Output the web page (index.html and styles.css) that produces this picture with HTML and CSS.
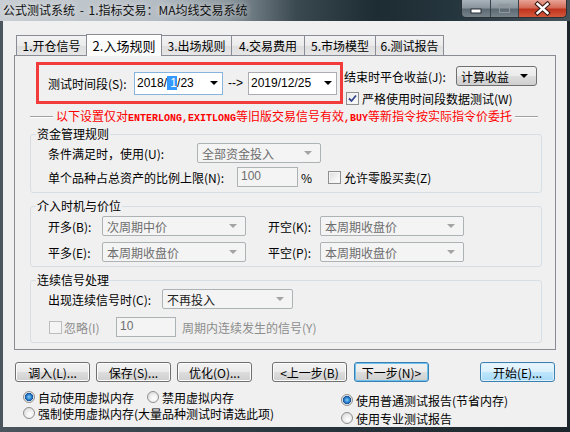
FILE: index.html
```html
<!DOCTYPE html>
<html lang="zh-CN">
<head>
    <meta charset="UTF-8">
    <title>公式测试系统</title>
    <link rel="stylesheet" href="styles.css">
</head>
<body>
<div class="window">

    <!-- Title bar -->
    <div class="titlebar">
        <span class="title">公式测试系统 - 1.指标交易：MA均线交易系统</span>
        <div class="caption-btns">
            <span class="cbtn cbtn-min">
                <svg width="28" height="17" viewBox="0 0 28 17"><rect x="9" y="9" width="10" height="4" fill="#fff" stroke="#2a2f34" stroke-width="1"/></svg>
            </span>
            <span class="cbtn cbtn-max">
                <svg width="27" height="17" viewBox="0 0 27 17"><rect x="8.5" y="4.5" width="10" height="8" fill="none" stroke="#8f979d" stroke-width="1"/><rect x="9.5" y="5.5" width="8" height="2" fill="#8f979d"/></svg>
            </span>
            <span class="cbtn cbtn-close">
                <svg width="47" height="17" viewBox="0 0 47 17">
                    <path d="M18.5 4 L28.5 13 M28.5 4 L18.5 13" stroke="#3a1a14" stroke-width="4.5" stroke-linecap="square"/>
                    <path d="M18.5 4 L28.5 13 M28.5 4 L18.5 13" stroke="#fff" stroke-width="2.4" stroke-linecap="square"/>
                </svg>
            </span>
        </div>
    </div>

    <div class="client">
        <!-- Tabs -->
        <div class="tabs">
            <div class="tab w70">1.开仓信号</div>
            <div class="tab active">2.入场规则</div>
            <div class="tab w70">3.出场规则</div>
            <div class="tab w73">4.交易费用</div>
            <div class="tab w71">5.市场模型</div>
            <div class="tab w69">6.测试报告</div>
        </div>

        <div class="panel">
            <div class="top-row">
                <div class="red-box">
                    <span class="lbl-date">测试时间段(S):</span>
                    <div class="date focus"><span>2018/<span class="sel">&nbsp;1</span>/23</span><i class="arrow"></i></div>
                    <span class="to">--&gt;</span>
                    <div class="date"><span>2019/12/25</span><i class="arrow"></i></div>
                </div>
                <div class="right-col">
                    <div class="row-r1">
                        <span class="lbl-end">结束时平仓收益(J):</span>
                        <div class="combo">计算收益<i class="arrow"></i></div>
                    </div>
                    <div class="row-r2">
                        <span class="check checked">
                            <svg width="9" height="9" viewBox="0 0 9 9"><path d="M1 4.5 L3.5 7 L8 1.5" fill="none" stroke="#34458c" stroke-width="1.8"/></svg>
                        </span>
                        <span>严格使用时间段数据测试(W)</span>
                    </div>
                </div>
            </div>

            <div class="notice">
                <span class="rule"></span>
                <span class="notice-text">以下设置仅对<b>ENTERLONG,EXITLONG</b>等旧版交易信号有效<b>,BUY</b>等新指令按实际指令价委托</span>
                <span class="rule"></span>
            </div>

            <fieldset class="group g1">
                <legend>资金管理规则</legend>
                <div class="row">
                    <span class="lbl w149">条件满足时，使用(U):</span>
                    <div class="dis-select w124">全部资金投入<i class="arrow gray"></i></div>
                </div>
                <div class="row r2">
                    <span class="lbl w189">单个品种占总资产的比例上限(N):</span>
                    <div class="dis-input w61">100</div>
                    <span class="pct">%</span>
                    <span class="check"></span>
                    <span class="chk-lbl">允许零股买卖(Z)</span>
                </div>
            </fieldset>

            <fieldset class="group g2">
                <legend>介入时机与价位</legend>
                <div class="row">
                    <span class="lbl w54">开多(B):</span>
                    <div class="dis-select w144">次周期中价<i class="arrow gray"></i></div>
                    <span class="lbl w52 ml22">开空(K):</span>
                    <div class="dis-select w144">本周期收盘价<i class="arrow gray"></i></div>
                </div>
                <div class="row r2">
                    <span class="lbl w54">平多(E):</span>
                    <div class="dis-select w144">本周期收盘价<i class="arrow gray"></i></div>
                    <span class="lbl w52 ml22">平空(P):</span>
                    <div class="dis-select w144">本周期收盘价<i class="arrow gray"></i></div>
                </div>
            </fieldset>

            <fieldset class="group g3">
                <legend>连续信号处理</legend>
                <div class="row">
                    <span class="lbl w114">出现连续信号时(C):</span>
                    <div class="combo-flat w131">不再投入<i class="arrow gray"></i></div>
                </div>
                <div class="row r2">
                    <span class="check disabled"></span>
                    <span class="lbl-dis w52">忽略(I)</span>
                    <div class="dis-input w60">10</div>
                    <span class="lbl-dis ml6">周期内连续发生的信号(Y)</span>
                </div>
            </fieldset>
        </div>

        <!-- Bottom buttons -->
        <div class="buttons">
            <button class="btn">调入(L)...</button>
            <button class="btn ml6">保存(S)...</button>
            <button class="btn ml6">优化(O)...</button>
            <button class="btn ml20">&lt;上一步(B)</button>
            <button class="btn focus ml7">下一步(N)&gt;</button>
            <button class="btn default ml51">开始(E)...</button>
        </div>

        <div class="options">
            <div class="opt-left">
                <div class="opt-row">
                    <span class="radio on"></span><span>自动使用虚拟内存</span>
                    <span class="radio ml13"></span><span>禁用虚拟内存</span>
                </div>
                <div class="opt-row">
                    <span class="radio"></span><span>强制使用虚拟内存(大量品种测试时请选此项)</span>
                </div>
            </div>
            <div class="opt-right">
                <div class="opt-row tall">
                    <span class="radio on"></span><span>使用普通测试报告(节省内存)</span>
                </div>
                <div class="opt-row tall">
                    <span class="radio"></span><span>使用专业测试报告</span>
                </div>
            </div>
        </div>
    </div>
</div>
</body>
</html>
```

FILE: styles.css
```css
/* General styling */
* {
    margin: 0;
    padding: 0;
    box-sizing: border-box;
}

body {
    width: 570px;
    height: 432px;
    overflow: hidden;
    background-color: #1e272e;
    font-family: "Noto Sans CJK SC", sans-serif;
    font-size: 12px;
    color: #000;
}

.window {
    width: 570px;
    height: 432px;
    display: flex;
    flex-direction: column;
    background: linear-gradient(to right, #4a555d 0%, #2a363e 50%, #1b252b 100%);
}

/* Title bar */
.titlebar {
    height: 22px;
    display: flex;
    align-items: flex-start;
    background: linear-gradient(to right, #c8ced3 0%, #b4bcc3 28%, #8a959c 40%, #3a4850 52%, #1d2b32 66%, #26363e 80%, #46535b 100%);
}

.title {
    flex: 1;
    padding-left: 3px;
    line-height: 20px;
    font-size: 12px;
    color: #111;
    text-shadow: 0 0 6px rgba(255, 255, 255, 0.8);
    white-space: nowrap;
    word-spacing: 2px;
}

.caption-btns {
    display: flex;
    margin-right: 3px;
    border: 1px solid #2b3035;
    border-top: none;
    border-radius: 0 0 5px 5px;
    overflow: hidden;
    height: 18px;
}

.cbtn {
    display: block;
    height: 17px;
}

.cbtn svg {
    display: block;
}

.cbtn-min, .cbtn-max {
    background: linear-gradient(to bottom, #a9b3ba 0%, #8a959d 45%, #5d6a73 55%, #76838b 100%);
    border-right: 1px solid #3a4248;
}

.cbtn-close {
    background: linear-gradient(to bottom, #e8a396 0%, #d46c58 45%, #c0341d 55%, #d4583c 100%);
}

/* Client area */
.client {
    flex: 1;
    margin: 0 3px 5px 3px;
    background-color: #f0f0f0;
    display: flex;
    flex-direction: column;
}

.tabs {
    display: flex;
    align-items: flex-end;
    height: 22px;
    margin-top: 13px;
    padding-left: 13px;
    position: relative;
    z-index: 1;
}

.tab {
    height: 20px;
    margin-bottom: 1px;
    border: 1px solid #898c95;
    border-bottom: none;
    border-right: none;
    background: linear-gradient(to bottom, #f3f3f3 0%, #ebebeb 50%, #dedede 51%, #e6e6e6 100%);
    text-align: center;
    line-height: 19px;
    white-space: nowrap;
}

.tab.w73 { width: 73px; }
.tab.w71 { width: 71px; }
.tab.w70 { width: 70px; }
.tab.w69 { width: 69px; border-right: 1px solid #898c95; }

.tab.active {
    width: 76px;
    height: 22px;
    margin-bottom: 0;
    border-right: 1px solid #898c95;
    margin-right: -1px;
    background: #fdfdfd;
    line-height: 21px;
    font-size: 13px;
}

.panel {
    margin: -1px 0 0 11px;
    width: 542px;
    height: 295px;
    border: 1px solid #898c95;
    background-color: #f0f0f0;
    display: flex;
    flex-direction: column;
}

/* Date row with red highlight */
.top-row {
    display: flex;
    margin-top: 6px;
    height: 42px;
}

.red-box {
    width: 307px;
    height: 42px;
    margin-left: 21px;
    border: 3px solid #f23b3b;
    display: flex;
    align-items: center;
    padding-left: 9px;
}

.lbl-date {
    width: 86px;
    white-space: nowrap;
}

.date {
    width: 89px;
    height: 23px;
    border: 1px solid #abadb3;
    background: #fff;
    display: flex;
    align-items: center;
    padding: 0 4px 0 2px;
    font-family: "Liberation Sans", sans-serif;
    font-size: 12px;
}

.date.focus {
    border-color: #88b3de;
}

.date .sel {
    background-color: #3399ff;
    color: #fff;
}

.to {
    width: 25px;
    text-align: center;
    font-family: "Liberation Sans", sans-serif;
}

.arrow {
    display: block;
    margin-left: auto;
    width: 0;
    height: 0;
    border-left: 4px solid transparent;
    border-right: 4px solid transparent;
    border-top: 4px solid #000;
}

.arrow.gray {
    border-top-color: #a3a3a3;
}

.right-col {
    margin-left: 1px;
    display: flex;
    flex-direction: column;
}

.row-r1 {
    display: flex;
    align-items: center;
    height: 20px;
    margin-top: 4px;
}

.lbl-end {
    width: 112px;
    white-space: nowrap;
}

.combo {
    width: 81px;
    height: 20px;
    border: 1px solid #707070;
    border-radius: 3px;
    background: linear-gradient(to bottom, #f2f2f2 0%, #ebebeb 50%, #dddddd 51%, #cfcfcf 100%);
    display: flex;
    align-items: center;
    padding: 0 8px 0 4px;
}

.row-r2 {
    display: flex;
    align-items: center;
    height: 13px;
    margin-top: 6px;
    padding-left: 2px;
    line-height: 13px;
}

.check {
    width: 13px;
    height: 13px;
    border: 1px solid #8e8f8f;
    background: linear-gradient(135deg, #dcdcdc 0%, #f7f7f7 70%, #ffffff 100%);
    box-shadow: inset 0 0 0 1px #f4f4f4;
    display: flex;
    align-items: center;
    justify-content: center;
    margin-right: 3px;
    flex-shrink: 0;
}

.check.checked {
    background: linear-gradient(135deg, #e8e8e8 0%, #ffffff 100%);
}

.check.disabled {
    border-color: #bcbcbc;
    background: #f4f4f4;
    box-shadow: none;
}

/* Red notice line */
.notice {
    display: flex;
    align-items: center;
    margin: 7px 0 0 15px;
    width: 508px;
    height: 12px;
    gap: 3px;
}

.notice-text {
    color: #ff0000;
    line-height: 12px;
    white-space: nowrap;
}

.notice-text b {
    font-family: "Liberation Mono", monospace;
    font-size: 10px;
    font-weight: bold;
}

.rule {
    flex: 1;
    height: 2px;
    border-top: 1px solid #a0a0a0;
    border-bottom: 1px solid #ffffff;
}

/* Group boxes */
.group {
    margin-left: 15px;
    width: 512px;
    border: 1px solid #d5dfe5;
    border-radius: 3px;
    padding: 0;
    min-inline-size: 0;
}

.group legend {
    margin-left: 5px;
    padding: 0 1px;
    height: 14px;
    line-height: 14px;
}

.g1 { margin-top: 4px; padding: 2px 0 5px 0; }
.g2 { margin-top: 6px; padding: 3px 0 4px 0; }
.g3 { margin-top: 6px; padding: 2px 0 5px 0; }

.row {
    display: flex;
    align-items: center;
    height: 20px;
    margin-left: 17px;
    white-space: nowrap;
}

.g1 .r2 { margin-top: 4px; }
.g2 .r2 { margin-top: 6px; }
.g3 .r2 { margin-top: 8px; }

.lbl { flex-shrink: 0; }
.lbl-dis { color: #8d8d8d; flex-shrink: 0; }

.w52 { width: 52px; }
.w54 { width: 54px; }
.w114 { width: 114px; }
.w149 { width: 149px; }
.w189 { width: 189px; }
.ml22 { margin-left: 22px; }
.ml6 { margin-left: 6px; }
.ml7 { margin-left: 7px; }
.ml13 { margin-left: 13px; }
.ml20 { margin-left: 20px; }
.ml51 { margin-left: 51px; }

.dis-select, .combo-flat {
    height: 20px;
    border: 1px solid #adb2b5;
    border-radius: 2px;
    background: #f4f4f4;
    color: #6d6d6d;
    display: flex;
    align-items: center;
    padding: 0 8px 0 4px;
}

.combo-flat {
    color: #222;
}

.w124 { width: 124px; }
.w131 { width: 131px; }
.w144 { width: 144px; }

.dis-input {
    height: 20px;
    border: 1px solid #adb2b5;
    background: #f4f4f4;
    color: #6d6d6d;
    padding: 0 3px;
    line-height: 17px;
    font-family: "Liberation Sans", sans-serif;
}

.w60 { width: 60px; }
.w61 { width: 61px; }

.pct {
    width: 30px;
    padding-left: 3px;
}

.chk-lbl { margin-left: 0; }

.g3 .r2 .check { margin-left: 1px; margin-right: 2px; }

/* Buttons */
.buttons {
    display: flex;
    margin: 12px 0 0 12px;
    height: 20px;
}

.btn {
    width: 75px;
    height: 20px;
    border: 1px solid #707070;
    border-radius: 3px;
    background: linear-gradient(to bottom, #f2f2f2 0%, #ebebeb 50%, #dddddd 51%, #cfcfcf 100%);
    box-shadow: inset 0 0 0 1px #fcfcfc;
    font-family: "Noto Sans CJK SC", sans-serif;
    font-size: 12px;
    line-height: 17px;
    color: #000;
    cursor: pointer;
}

.btn.focus, .btn.default {
    border-color: #3c7fb1;
    background: linear-gradient(to bottom, #eaf6fd 0%, #d9f0fc 50%, #bee6fd 51%, #a7d9f5 100%);
    box-shadow: inset 0 0 0 1px #dff2fc;
}

.btn.focus {
    background: linear-gradient(to bottom, #f2f2f2 0%, #ebebeb 50%, #dddddd 51%, #cfcfcf 100%);
    box-shadow: inset 0 0 0 1px #6bc2ec;
}

/* Radio options */
.options {
    display: flex;
    margin-top: 7px;
}

.opt-left {
    width: 318px;
    margin-left: 20px;
}

.opt-right {
    margin-top: 2px;
}

.opt-row {
    display: flex;
    align-items: center;
    height: 16px;
    white-space: nowrap;
}

.opt-row.tall {
    height: 18px;
}

.radio {
    width: 12px;
    height: 12px;
    border-radius: 50%;
    border: 1px solid #8e8f8f;
    background: radial-gradient(circle at 60% 65%, #ffffff 0%, #f0f0f0 40%, #d0d0d0 100%);
    margin-right: 3px;
    flex-shrink: 0;
}

.radio.on {
    background: radial-gradient(circle at 50% 50%, #86cdf8 0%, #2d84cf 35%, #154f97 55%, #e6e6e6 62%, #f6f6f6 100%);
}
```
